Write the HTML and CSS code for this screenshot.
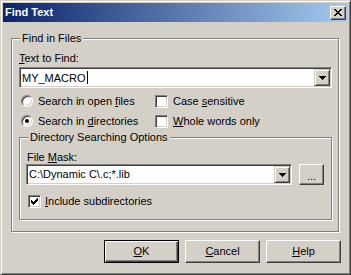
FILE: index.html
```html
<!doctype html>
<html lang="en">
  <head>
    <meta charset="UTF-8" />
    <title>Find Text</title>
    <link rel="stylesheet" href="styles.css">
  </head>
  <body>
    <div class="window">
      <div class="titlebar">
        <span class="title">Find Text</span>
        <button class="close" type="button" aria-label="Close">
          <svg width="8" height="7" viewBox="0 0 8 7" shape-rendering="crispEdges">
            <path d="M0 0h2v1h-2z M6 0h2v1h-2z M1 1h2v1h-2z M5 1h2v1h-2z M2 2h4v1h-4z M3 3h2v1h-2z M2 4h4v1h-4z M1 5h2v1h-2z M5 5h2v1h-2z M0 6h2v1h-2z M6 6h2v1h-2z" fill="#000"/>
          </svg>
        </button>
      </div>

      <div class="client">
        <div class="group group-files">
          <div class="group-title">Find in Files</div>
          <div class="field-label"><u>T</u>ext to Find:</div>
          <div class="combo combo-find">
            <div class="combo-text">MY_MACRO<span class="caret"></span></div>
            <div class="drop"><svg width="7" height="4" viewBox="0 0 7 4" shape-rendering="crispEdges"><path d="M0 0H7V1H6V2H5V3H4V4H3V3H2V2H1V1H0Z" fill="#000"/></svg></div>
          </div>

          <div class="options">
            <label class="opt"><span class="radio"></span><span>Search in open <u>f</u>iles</span></label>
            <label class="opt"><span class="check"></span><span>Case <u>s</u>ensitive</span></label>
            <label class="opt"><span class="radio on"></span><span>Search in <u>d</u>irectories</span></label>
            <label class="opt"><span class="check"></span><span><u>W</u>hole words only</span></label>
          </div>

          <div class="group group-dirs">
            <div class="group-title">Directory Searching Options</div>
            <div class="field-label">File <u>M</u>ask:</div>
            <div class="mask-row">
              <div class="combo combo-mask">
                <div class="combo-text">C:\Dynamic C\.c;*.lib</div>
                <div class="drop"><svg width="7" height="4" viewBox="0 0 7 4" shape-rendering="crispEdges"><path d="M0 0H7V1H6V2H5V3H4V4H3V3H2V2H1V1H0Z" fill="#000"/></svg></div>
              </div>
              <button class="btn btn-browse" type="button">...</button>
            </div>
            <label class="opt opt-sub">
              <span class="check">
                <svg width="7" height="7" viewBox="0 0 7 7" shape-rendering="crispEdges"><path d="M0 2h1v3h-1z M1 3h1v3h-1z M2 4h1v3h-1z M3 3h1v3h-1z M4 2h1v3h-1z M5 1h1v3h-1z M6 0h1v3h-1z" fill="#000"/></svg>
              </span><span><u>I</u>nclude subdirectories</span>
            </label>
          </div>
        </div>

        <div class="buttons">
          <button class="btn btn-default" type="button"><u>O</u>K</button>
          <button class="btn" type="button"><u>C</u>ancel</button>
          <button class="btn" type="button"><u>H</u>elp</button>
        </div>
      </div>
    </div>
  </body>
</html>
```

FILE: styles.css
```css
/* Win2k style dialog */
:root {
  --face: #d4d0c8;
  --shadow: #808080;
  --dark: #404040;
  --light: #ffffff;
}

* {
  box-sizing: border-box;
}

body {
  margin: 0;
  background: var(--face);
  font-family: 'Liberation Sans', Arial, sans-serif;
  font-size: 11px;
  line-height: 13px;
  color: #000;
}

u {
  text-underline-offset: 1px;
}

.window {
  width: 351px;
  height: 275px;
  padding: 2px;
  border: 1px solid;
  border-color: var(--face) var(--dark) var(--dark) var(--face);
  box-shadow: inset 1px 1px var(--light), inset -1px -1px var(--shadow);
  background: var(--face);
  display: flex;
  flex-direction: column;
}

.titlebar {
  height: 19px;
  padding: 0 2px;
  display: flex;
  align-items: center;
  justify-content: space-between;
  background: linear-gradient(to right, #0a246a, #a6caf0);
}

.title {
  color: #fff;
  font-weight: bold;
}

.close {
  width: 16px;
  height: 14px;
  padding: 0;
  display: flex;
  align-items: center;
  justify-content: center;
  background: var(--face);
  border: 1px solid;
  border-color: var(--light) var(--dark) var(--dark) var(--light);
  box-shadow: inset -1px -1px var(--shadow);
}

.client {
  flex: 1;
}

/* etched group boxes */
.group {
  border: 1px solid var(--shadow);
  box-shadow: inset 1px 1px var(--light), 1px 1px var(--light);
}

.group-title {
  width: fit-content;
  margin-top: -7px;
  padding: 0 2px;
  background: var(--face);
}

.group-files {
  width: 328px;
  margin: 16px 0 0 8px;
  padding: 0 6px 11px 7px;
}

.group-files > .group-title {
  margin-left: 1px;
}

.group-files > .field-label {
  margin-top: 7px;
}

.combo {
  display: flex;
  height: 21px;
  padding: 1px;
  border: 1px solid;
  border-color: var(--shadow) var(--light) var(--light) var(--shadow);
  box-shadow: inset 1px 1px var(--dark), inset -1px -1px var(--face);
  background: #fff;
}

.combo-find {
  margin-top: 2px;
}

.combo-text {
  flex: 1;
  padding: 2px 0 0 1px;
  white-space: nowrap;
  overflow: hidden;
}

.caret {
  display: inline-block;
  width: 1px;
  height: 13px;
  margin-left: 1px;
  vertical-align: -2px;
  background: #000;
}

.drop {
  width: 16px;
  height: 17px;
  display: flex;
  align-items: center;
  justify-content: center;
  background: var(--face);
  border: 1px solid;
  border-color: var(--face) var(--dark) var(--dark) var(--face);
  box-shadow: inset 1px 1px var(--light), inset -1px -1px var(--shadow);
}

.options {
  display: grid;
  grid-template-columns: 134px 1fr;
  grid-auto-rows: 20px;
  margin: 3px 0 0 2px;
}

.opt {
  display: flex;
  align-items: center;
  gap: 5px;
  white-space: nowrap;
}

.radio {
  width: 12px;
  height: 12px;
  border-radius: 50%;
  border: 1px solid;
  border-color: var(--shadow) var(--light) var(--light) var(--shadow);
  box-shadow: inset 1px 1px var(--dark), inset -1px -1px var(--face);
  background: #fff;
  display: flex;
  align-items: center;
  justify-content: center;
}

.radio.on::after {
  content: '';
  width: 4px;
  height: 4px;
  border-radius: 50%;
  background: #000;
}

.check {
  width: 13px;
  height: 13px;
  border: 1px solid;
  border-color: var(--shadow) var(--light) var(--light) var(--shadow);
  box-shadow: inset 1px 1px var(--dark), inset -1px -1px var(--face);
  background: #fff;
  display: flex;
  align-items: center;
  justify-content: center;
}

.group-dirs {
  margin-top: 6px;
  padding: 0 6px 11px 6px;
}

.group-dirs > .group-title {
  margin-left: 2px;
}

.group-dirs > .field-label {
  margin-top: 7px;
  margin-left: 1px;
}

.mask-row {
  display: flex;
  gap: 7px;
}

.combo-mask {
  width: 266px;
}

.opt-sub {
  margin: 10px 0 0 2px;
  gap: 4px;
}

/* push buttons */
.btn {
  width: 75px;
  height: 23px;
  padding: 0;
  font: inherit;
  color: #000;
  background: var(--face);
  border: 1px solid;
  border-color: var(--light) var(--dark) var(--dark) var(--light);
  box-shadow: inset -1px -1px var(--shadow);
}

.btn-default {
  border-color: #000;
  box-shadow: inset 1px 1px var(--light), inset -1px -1px var(--dark), inset -2px -2px var(--shadow);
}

.btn-browse {
  width: 25px;
  height: 21px;
  padding-top: 3px;
}

.buttons {
  display: flex;
  justify-content: flex-end;
  gap: 6px;
  margin: 8px 7px 0 0;
}
```
